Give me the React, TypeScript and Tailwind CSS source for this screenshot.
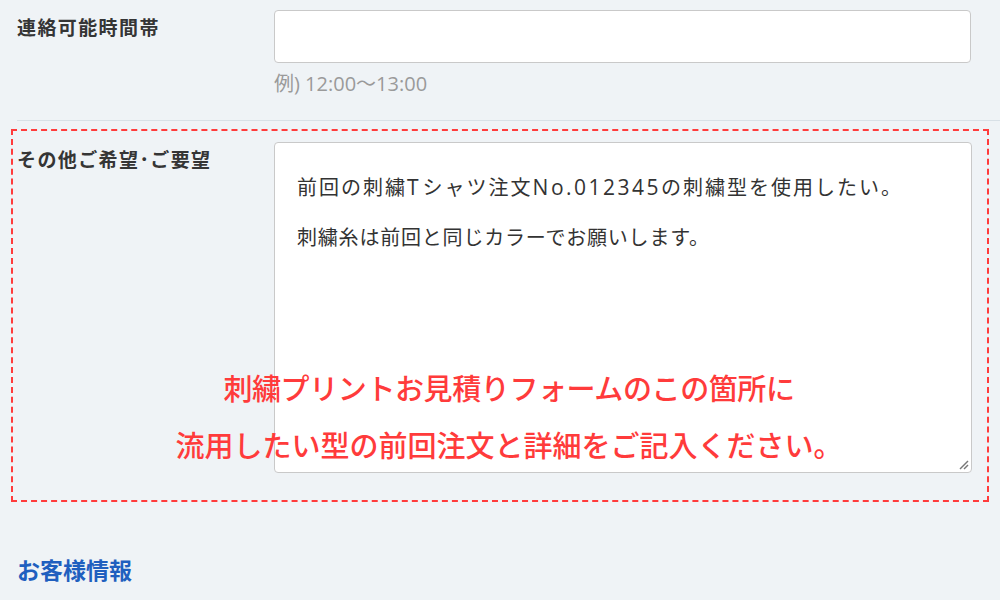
import React from "react"

const jp = "font-['Meiryo','Noto_Sans_CJK_JP',sans-serif]"
const latin = "font-['Open_Sans','Noto_Sans_CJK_JP',sans-serif]"

function FormRow({ label, children }: { label: string; children: React.ReactNode }) {
  return (
    <div className="flex">
      <div className="w-[257px] shrink-0 pt-[3px] text-[19px] font-semibold text-[#353535] tracking-[1.4px]">{label}</div>
      <div className="flex-1">{children}</div>
    </div>
  )
}

// テキストエリア風の表示ボックス（右下にリサイズハンドル）
function NoteBox({ children }: { children: React.ReactNode }) {
  return (
    <div className="relative w-full h-[331px] bg-white border border-[#c9c9c9] rounded-[4px] pl-[22px] pr-4 pt-[19px] text-[20px] leading-[50px] text-[#333]">
      {children}
      <svg className="absolute right-[2px] bottom-[2px]" width="11" height="11" viewBox="0 0 11 11">
        <line x1="10" y1="2" x2="2" y2="10" stroke="#777" strokeWidth="1.4" />
        <line x1="10" y1="6" x2="6" y2="10" stroke="#777" strokeWidth="1.4" />
      </svg>
    </div>
  )
}

export default function App() {
  return (
    <div className={`w-[1000px] h-[600px] overflow-hidden bg-[#eff3f6] ${jp}`}>
      {/* 連絡可能時間帯 */}
      <div className="pl-[17px] pr-[29px] pt-[10px]">
        <FormRow label="連絡可能時間帯">
          <input
            type="text"
            className="block w-full h-[53px] bg-white border border-[#c9c9c9] rounded-[4px] px-3 outline-none"
          />
          <p className={`mt-[8px] text-[20px] leading-[26px] text-[#9a9a9a] ${latin}`}>例) 12:00〜13:00</p>
        </FormRow>
      </div>
      <div className="ml-[17px] mt-[23px] border-t border-[#d8e0e6]" />

      {/* その他ご希望・ご要望 */}
      <div className="relative mt-[8px] ml-[11px] w-[978px] h-[373px] border-2 border-dashed border-[#ff3b3b] pl-[4px] pr-[15px] pt-[11px]">
        <FormRow label="その他ご希望･ご要望">
          <NoteBox>
            <p className="tracking-[2px]">
              前回の刺繍<span className={`${latin} text-[21px] tracking-[4px]`}>T</span>シャツ注文
              <span className={`${latin} text-[21px] tracking-[2.5px]`}>No.012345</span>の刺繍型を使用したい。
            </p>
            <p className="tracking-[0.8px]">刺繍糸は前回と同じカラーでお願いします。</p>
          </NoteBox>
        </FormRow>
        <div className="absolute left-0 right-0 top-[228px] text-center text-[29px] leading-[57px] font-medium text-[#ff3b3b]">
          <p className="pl-[18px] tracking-[-0.4px]">刺繍プリントお見積りフォームのこの箇所に</p>
          <p className="pl-[18px]">流用したい型の前回注文と詳細をご記入ください。</p>
        </div>
      </div>

      {/* お客様情報 */}
      <h2 className="mt-[50px] pl-[17px] text-[23px] font-bold text-[#1f5fbf]">お客様情報</h2>
    </div>
  )
}
